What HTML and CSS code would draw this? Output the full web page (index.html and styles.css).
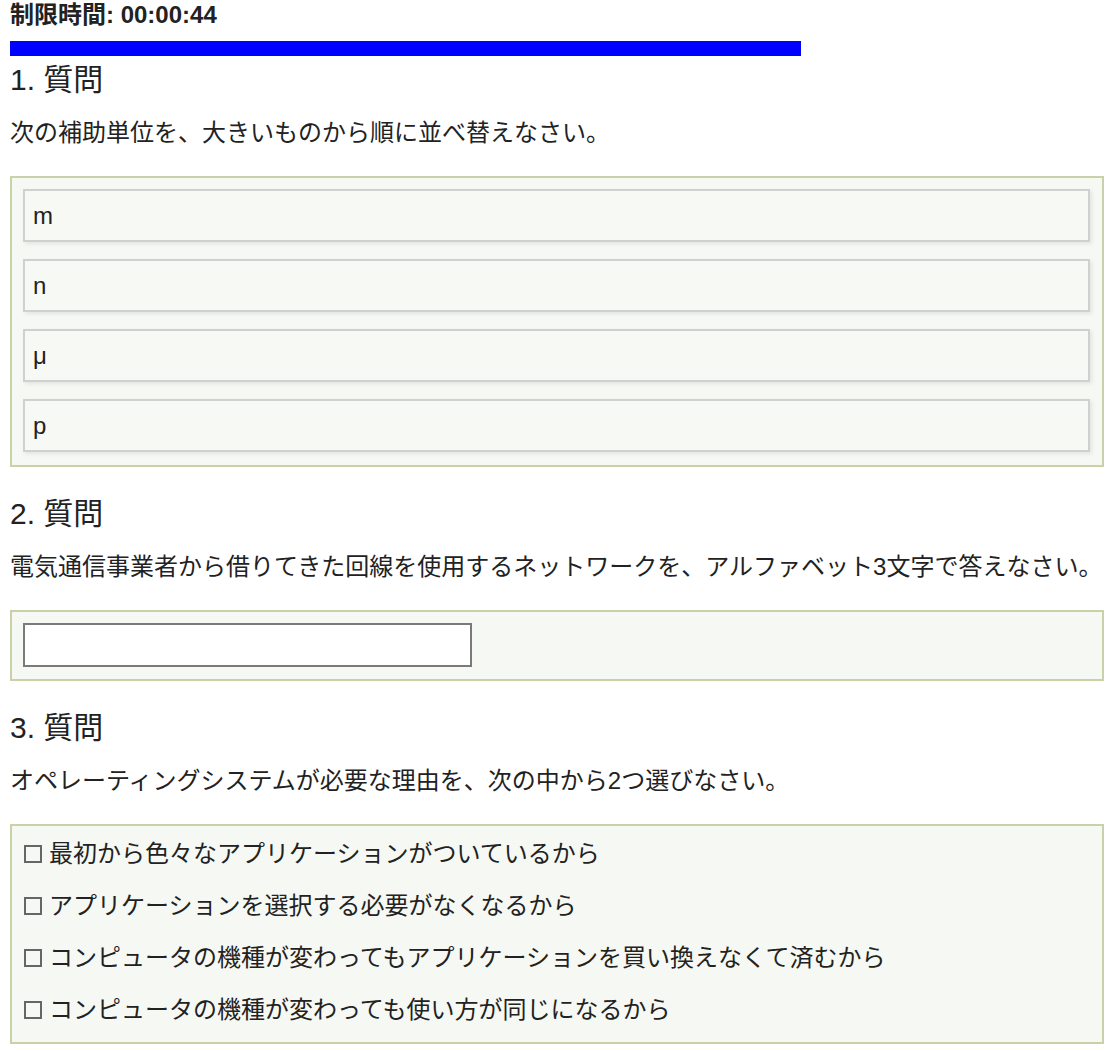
FILE: index.html
```html
<!DOCTYPE html>
<html lang="ja">
<head>
  <meta charset="UTF-8" />
  <title>確認テスト</title>
  <link rel="stylesheet" href="styles.css">
</head>
<body>

  <div class="timer">制限時間: 00:00:44</div>
  <div class="timebar"></div>

  <div class="question">
    <h2>1. 質問</h2>
    <p>次の補助単位を、大きいものから順に並べ替えなさい。</p>
    <div class="answer">
      <ul class="sortable">
        <li>m</li>
        <li>n</li>
        <li>μ</li>
        <li>p</li>
      </ul>
    </div>
  </div>

  <div class="question">
    <h2>2. 質問</h2>
    <p>電気通信事業者から借りてきた回線を使用するネットワークを、アルファベット3文字で答えなさい。</p>
    <div class="answer short">
      <input type="text" class="text-answer">
    </div>
  </div>

  <div class="question">
    <h2>3. 質問</h2>
    <p>オペレーティングシステムが必要な理由を、次の中から2つ選びなさい。</p>
    <div class="answer choices">
      <label><span class="check"></span>最初から色々なアプリケーションがついているから</label>
      <label><span class="check"></span>アプリケーションを選択する必要がなくなるから</label>
      <label><span class="check"></span>コンピュータの機種が変わってもアプリケーションを買い換えなくて済むから</label>
      <label><span class="check"></span>コンピュータの機種が変わっても使い方が同じになるから</label>
    </div>
  </div>

</body>
</html>
```

FILE: styles.css
```css
body {
  font-family: 'Liberation Sans', 'Noto Sans CJK JP', sans-serif;
  color: #222;
  background-color: #fff;
  margin: 0 13px 0 10px;
  font-size: 24px;
}

.timer {
  font-weight: bold;
  line-height: 30px;
}

.timebar {
  width: 72.3%;
  height: 15px;
  margin-top: 11px;
  background-color: #0000ff;
}

.question h2 {
  font-size: 30px;
  font-weight: normal;
  line-height: 36px;
  margin: 6px 0 0;
}

.question + .question h2 {
  margin-top: 29px;
}

.question p {
  line-height: 30px;
  margin: 20px 0 28px;
}

.answer {
  background-color: #f6f8f3;
  border: 2px solid #c9d1a9;
  padding: 11px 12px 13px 11px;
}

.answer.short {
  padding-bottom: 12px;
}

.sortable {
  list-style: none;
  margin: 0;
  padding: 0;
  display: flex;
  flex-direction: column;
  gap: 17px;
}

.sortable li {
  background-color: #f7f9f5;
  border: 2px solid #d0d0d0;
  box-shadow: 2px 2px 4px rgba(0,0,0,0.08);
  line-height: 49px;
  padding: 0 8px;
}

.text-answer {
  display: block;
  width: 449px;
  height: 44px;
  box-sizing: border-box;
  border: 2px solid #7a7a7a;
  background-color: #fff;
  font-size: 20px;
  margin: 0;
}

.choices {
  display: flex;
  flex-direction: column;
  gap: 20px;
  padding-top: 12px;
  padding-bottom: 16px;
}

.choices label {
  display: flex;
  align-items: center;
  line-height: 32px;
}

.check {
  width: 18px;
  height: 18px;
  box-sizing: border-box;
  border: 2px solid #666;
  margin: 0 7px 0 1px;
  flex-shrink: 0;
}
```
